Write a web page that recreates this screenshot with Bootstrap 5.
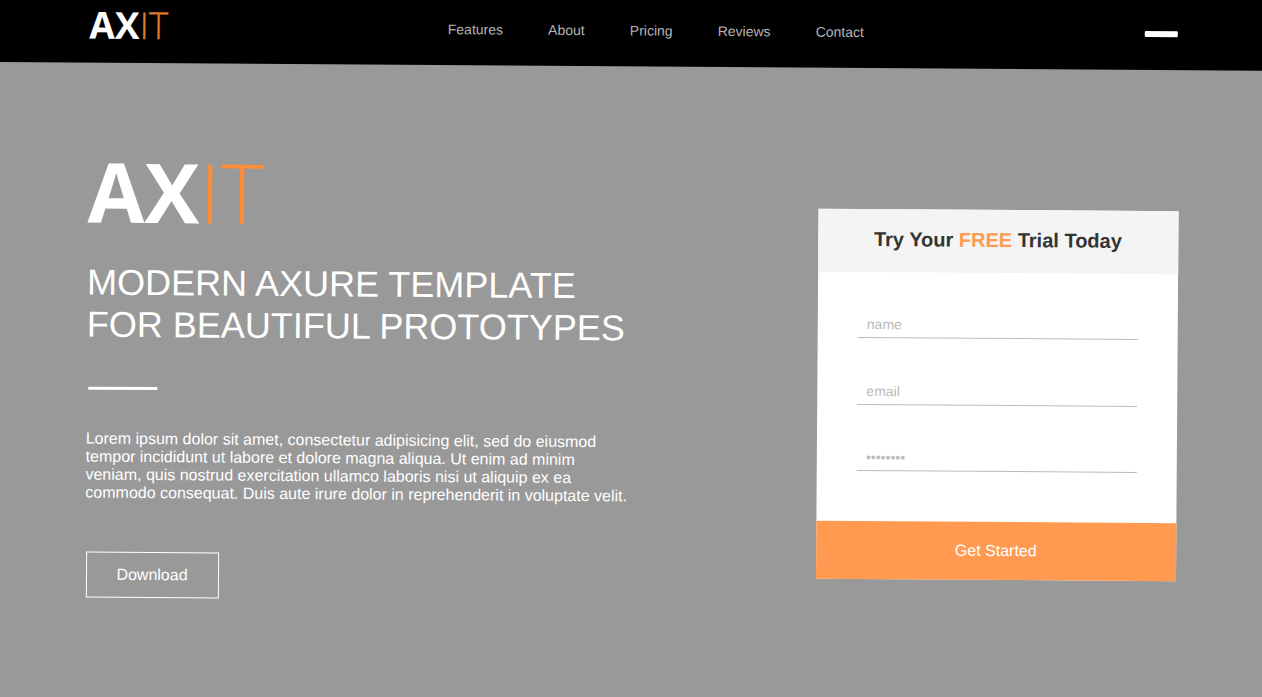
<!DOCTYPE html>
<html lang="en">
<head>
<meta charset="utf-8">
<meta name="viewport" content="width=device-width, initial-scale=1">
<title>AXIT</title>
<link href="https://cdn.jsdelivr.net/npm/bootstrap@5.3.0/dist/css/bootstrap.min.css" rel="stylesheet">
<style>
body{background:#999;font-family:"Liberation Sans",Arial,sans-serif;height:697px;overflow:hidden}
/* the whole page is tilted slightly clockwise */
.tilt{width:1262px;height:697px;transform:rotate(.4deg);transform-origin:0 0}
.topbar{height:62.4px;margin:0 -20px;padding:0 104px 0 109.5px;background:#000;box-shadow:0 -20px 0 #000}
.logo{font-family:"Open Sans",sans-serif;font-weight:700;color:#fff;line-height:1;white-space:nowrap;text-decoration:none}
.logo span{font-weight:300;color:#ff8d35}
.logo-sm{font-size:37px;width:358.5px;margin-top:4.6px}
.logo-sm span{color:#e07a2c;-webkit-text-stroke:.3px #e07a2c}
.logo-lg{font-size:82.5px;margin-left:1px}
.menu{gap:45.1px;font-size:14px;line-height:16px;margin-top:18.2px}
.menu a{color:#b4b4b4;text-decoration:none}
.toggle{width:33.5px;height:6px;border-radius:1px;background:#fff;margin-top:23px}
.hero{padding:87px 82.4px 0 88px}
.intro{width:560px}
.intro h1{font-size:36px;line-height:42px;font-weight:400;margin:29.5px 0 0 1px;white-space:nowrap}
.rule{width:69px;height:3px;margin:41px 0 0 2.5px}
.intro p{font-size:16px;line-height:18px;margin:40px 0 0 .8px;white-space:nowrap}
.btn-dl{width:133px;height:46px;border:1px solid #fff;border-radius:0;color:#fff;font-size:16px;margin:50px 0 0 1.5px;padding:0}
.trial{width:360px;height:370px;border:0;border-radius:0;margin-top:53.6px}
.trial h2{height:63px;background:#f4f4f4;color:#333;font-size:20px;font-weight:700;padding-bottom:2px}
.trial h2 span{color:#ff9a50}
.fields{padding:36.4px 40px 0}
.fields input{height:30px;border:0;border-bottom:1px solid #bbb;border-radius:0;padding:3px 9.5px 0;font-size:14px;margin-bottom:36.3px}
.fields input::placeholder{color:#bbb}
.btn-go{height:58px;background:#ff9a50;color:#fff;border:0;border-radius:0;font-size:16px}
</style>
</head>
<body>
<div class="tilt">
  <nav class="topbar d-flex align-items-start">
    <a class="logo logo-sm" href="#">AX<span>IT</span></a>
    <div class="menu d-flex">
      <a href="#">Features</a><a href="#">About</a><a href="#">Pricing</a><a href="#">Reviews</a><a href="#">Contact</a>
    </div>
    <div class="toggle ms-auto"></div>
  </nav>
  <main class="hero d-flex justify-content-between align-items-start">
    <section class="intro text-white">
      <div class="logo logo-lg">AX<span>IT</span></div>
      <h1>MODERN AXURE TEMPLATE<br>FOR BEAUTIFUL PROTOTYPES</h1>
      <div class="rule bg-white"></div>
      <p>Lorem ipsum dolor sit amet, consectetur adipisicing elit, sed do eiusmod<br>tempor incididunt ut labore et dolore magna aliqua. Ut enim ad minim<br>veniam, quis nostrud exercitation ullamco laboris nisi ut aliquip ex ea<br>commodo consequat. Duis aute irure dolor in reprehenderit in voluptate velit.</p>
      <button class="btn btn-dl" type="button">Download</button>
    </section>
    <form class="card trial">
      <h2 class="d-flex align-items-center justify-content-center mb-0"><div>Try Your <span>FREE</span> Trial Today</div></h2>
      <div class="fields">
        <input class="form-control" type="text" placeholder="name" aria-label="name">
        <input class="form-control" type="email" placeholder="email" aria-label="email">
        <input class="form-control" type="password" placeholder="••••••••" aria-label="password">
      </div>
      <button class="btn btn-go mt-auto w-100" type="button">Get Started</button>
    </form>
  </main>
</div>
<script src="https://cdn.jsdelivr.net/npm/bootstrap@5.3.0/dist/js/bootstrap.bundle.min.js"></script>
</body>
</html>
